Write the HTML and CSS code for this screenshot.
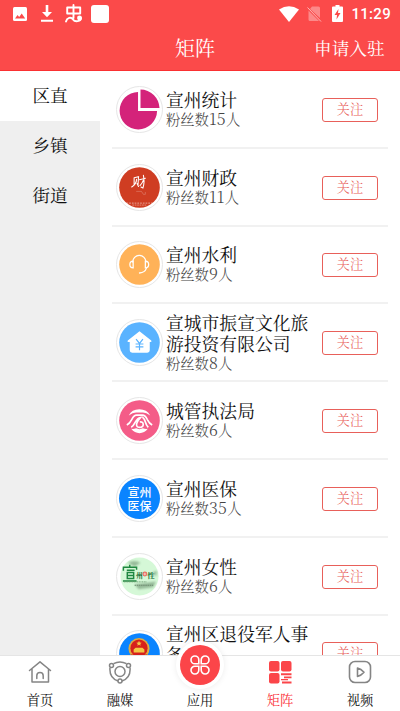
FILE: index.html
```html
<!DOCTYPE html>
<html lang="zh-CN">
<head>
  <meta charset="UTF-8">
  <meta name="viewport" content="width=device-width, initial-scale=1">
  <title>矩阵</title>
  <link rel="stylesheet" href="styles.css">
</head>
<body>
  <div class="app">
    <header class="header">
      <div class="status-bar">
        <div class="status-left">
          <svg width="14" height="14" viewBox="0 0 14 14"><rect width="14" height="14" rx="1.5" fill="#fff"/><path d="M2 11.500 4.500 8l1.700 2 2.500-3.400 3.500 4.900z" fill="#fb4a4a"/></svg>
          <svg width="12" height="17" viewBox="0 0 12 17"><path d="M4.700 0h2.600v7H11l-5 5.200L1 7h3.700zM0 14.700h12v2H0z" fill="#fff"/></svg>
          <svg width="18" height="19" viewBox="0 0 18 19" fill="none" stroke="#fff" stroke-width="1.900" stroke-linecap="round" stroke-linejoin="round"><path d="M2.200 3.500h13v6h-13zM8.500 1v13M1 17.500c1-4 5-5 7-2 2 3 8 2 8-1.500"/><circle cx="14.500" cy="14" r="1.500" fill="#fff"/></svg>
          <span class="status-block"></span>
        </div>
        <div class="status-right">
          <svg width="20" height="16" viewBox="0 0 20 16"><path d="M0 3.500Q10-3 20 3.500L10 16z" fill="#fff"/></svg>
          <svg width="15" height="16" viewBox="0 0 15 16"><path d="M5 .5h6.500q1.500 0 1.500 1.500v10L3 3zM1.500 4.500 12 15H3q-1.500 0-1.500-1.500z" fill="#fff" opacity=".35"/><path d="M.5 1.500 14 15.500" stroke="#fff" opacity=".6"/></svg>
          <svg width="11" height="17" viewBox="0 0 11 17"><path d="M3.500 0h4v1.500H10q1 0 1 1V16q0 1-1 1H1q-1 0-1-1V2.500q0-1 1-1h2.500z" fill="#fff"/><path d="M6.500 4 2.500 10H5l-.5 4.500L8.500 8H6z" fill="#fb4a4a"/></svg>
          <span class="clock">11:29</span>
        </div>
      </div>
      <div class="title-bar">
        <h1>矩阵</h1>
        <a class="apply">申请入驻</a>
      </div>
    </header>

    <main class="content">
      <nav class="sidebar">
        <a class="side-item active">区直</a>
        <a class="side-item">乡镇</a>
        <a class="side-item">街道</a>
      </nav>

      <ul class="list">
        <li class="row">
          <div class="avatar">
            <svg viewBox="0 0 42 42"><path d="M19.500 3A19.200 19.200 0 1 0 39 22.500H19.500z" fill="#d4237a"/><path d="M22 .5A19.500 19.500 0 0 1 41.500 19.500H22z" fill="#d4237a"/></svg>
          </div>
          <div class="info"><h2>宣州统计</h2><p>粉丝数<span>15</span>人</p></div>
          <button class="follow">关注</button>
        </li>
        <li class="row">
          <div class="avatar">
            <svg viewBox="0 0 42 42"><circle cx="21" cy="21" r="20.800" fill="#cf3d22"/><g fill="none" stroke="#fff" stroke-linecap="round"><path d="M15.500 11v7.500M15.500 11l4.500-1-.5 8M18 12.500c0 4-2 6-5 8M18.500 17l1.500 3" stroke-width="1.100"/><path d="M21 13l6-1.500M25 8.500c1 5 1 9-.5 13l-2-1M25 13.500c-1 3-2 4-3.500 5.500" stroke-width="1.100"/><path d="M18 25h5l2 3h2v-2" stroke-width=".5" opacity=".45"/><path d="M8 37h26" stroke-width=".9" stroke-dasharray="1 1.800" opacity=".6"/><path d="M14 39h14" stroke-width=".7" stroke-dasharray="1 1.500" opacity=".6"/></g></svg>
          </div>
          <div class="info"><h2>宣州财政</h2><p>粉丝数<span>11</span>人</p></div>
          <button class="follow">关注</button>
        </li>
        <li class="row">
          <div class="avatar">
            <svg viewBox="0 0 42 42"><circle cx="21" cy="21" r="20.800" fill="#ffb258"/><g fill="none" stroke="#fff" stroke-width="1.300" stroke-linecap="round"><path d="M14 18.500a6.800 6.800 0 0 1 13.600 0M28 25c-1 3-3.500 4.500-7 4.700"/><path d="M14.500 17.500v7c-4.500 0-4.500-7 0-7zM27 17.500v7c4.500 0 4.500-7 0-7z"/></g></svg>
          </div>
          <div class="info"><h2>宣州水利</h2><p>粉丝数<span>9</span>人</p></div>
          <button class="follow">关注</button>
        </li>
        <li class="row">
          <div class="avatar">
            <svg viewBox="0 0 42 42"><circle cx="21" cy="21" r="20.800" fill="#5ab3ff"/><path d="M21 9.500 33 19q1 1.500-.5 1.500h-1V29q0 2.500-2.500 2.500H13.500Q11 31.500 11 29v-8.500H9.500Q8 20.500 9 19z" fill="#fff"/><path d="m17.500 17.500 3.500 4.500 3.500-4.500M21 22v7M17 22.500h8M17 25.500h8" fill="none" stroke="#5ab3ff" stroke-width="1.200"/></svg>
          </div>
          <div class="info"><h2>宣城市振宣文化旅游投资有限公司</h2><p>粉丝数<span>8</span>人</p></div>
          <button class="follow">关注</button>
        </li>
        <li class="row">
          <div class="avatar">
            <svg viewBox="0 0 42 42">
              <circle cx="21" cy="21" r="20.800" fill="#f45c88"/>
              <path d="M10 16Q13 9.500 20.800 9.500T32 16Q28 12.800 24.500 12.800H17.500Q14 12.800 10 16zM12.500 29.500Q15 30 17.500 29q3.500 1.700 7 0 2.500 1 5 .5Q26 34 21 34T12.500 29.500z" fill="#fff"/>
              <path d="M8 25.500q3-1.500 5-5.500 2.200-4.500 5-4.500h6q3 0 5 4.500 2 4 5 5.500M12.500 28q2-1 4-5 2.500-4.500 5.500-5-3.500 3.500-4 6.500-.4 3.500 3 3.500 3.800 0 3.800-3t-3.500-2.500M24 17.500q2 1.500 3 5t3 5.500" fill="none" stroke="#fff" stroke-width="1.700"/>
            </svg>
          </div>
          <div class="info"><h2>城管执法局</h2><p>粉丝数<span>6</span>人</p></div>
          <button class="follow">关注</button>
        </li>
        <li class="row">
          <div class="avatar">
            <div class="avatar-text">宣州<br>医保</div>
          </div>
          <div class="info"><h2>宣州医保</h2><p>粉丝数<span>35</span>人</p></div>
          <button class="follow">关注</button>
        </li>
        <li class="row">
          <div class="avatar">
            <svg viewBox="0 0 42 42">
              <defs><filter id="ink"><feGaussianBlur stdDeviation="1.300"/></filter></defs>
              <circle cx="21" cy="21" r="19.500" fill="#d5f8d7"/>
              <path d="M9 7q7-4 13 0l-6 4zM16 29l22-3-3 6-15 2zM34 17l5-2-1 6z" fill="#6c9270" opacity=".6" filter="url(#ink)"/>
              <g fill="none" stroke="#1f8740" stroke-width="1.500"><path d="M4.500 15v-3.500H18V14M11 9v2.500M8 14.500h8M8.500 17h6.500v6H8.500zM8.500 20H15M4 25.500h14"/></g>
              <text x="17.500" y="22.500" font-size="7" fill="#176b34" font-weight="700">州</text>
              <text x="29" y="22.500" font-size="7.500" fill="#176b34" font-weight="700">性</text>
              <circle cx="26.500" cy="18.500" r="2.500" fill="#e8695c"/><path d="M25 18.500h3M26.500 17v3" stroke="#fff" stroke-width=".6"/>
              <path d="M5 26.500h23" stroke="#6c9a70" stroke-width="1" stroke-dasharray="1 .7"/>
              <path d="M16 30h19" stroke="#6e8a70" stroke-width="1.200" stroke-dasharray="1.500 .7"/>
            </svg>
          </div>
          <div class="info"><h2>宣州女性</h2><p>粉丝数<span>6</span>人</p></div>
          <button class="follow">关注</button>
        </li>
        <li class="row">
          <div class="avatar">
            <svg viewBox="0 0 42 42"><circle cx="21" cy="21" r="20.800" fill="#0a84ff"/><circle cx="20.500" cy="16" r="10.800" fill="#dfaa3e"/><circle cx="20.500" cy="15.500" r="8.800" fill="#d6201c"/><path d="m20.500 8 .8 1.700 1.900.2-1.400 1.300.4 1.900-1.700-1-1.700 1 .4-1.900-1.400-1.300 1.900-.2zM15 17l2-2h7l2 2v3H15z" fill="#f2c744"/><path d="M12 22h17l-2 7H14z" fill="#d6201c"/><path d="M13 23q7.500 4 15 0M17 28q3.500-4 7 0" fill="none" stroke="#efbd43" stroke-width="1.500"/></svg>
          </div>
          <div class="info"><h2>宣州区退役军人事务局</h2><p>粉丝数<span>8</span>人</p></div>
          <button class="follow">关注</button>
        </li>
      </ul>
    </main>

    <nav class="tab-bar">
      <a class="tab">
        <svg width="24" height="24" viewBox="0 0 24 24" fill="none" stroke="#858585" stroke-width="1.500" stroke-linejoin="round" stroke-linecap="round"><path d="M4 9v13h16.500V9M1.500 10.500 12 1.800l10.500 8.700M8.800 18.500v-2.700a3.200 3.200 0 0 1 6.400 0v2.700"/></svg>
        <span>首页</span>
      </a>
      <a class="tab">
        <svg width="24" height="24" viewBox="0 0 24 24" fill="none" stroke="#858585" stroke-width="1.500"><path d="M5.500 3.700Q12 .2 18.500 3.700M2 7.500q-1 10.500 8 13.500M22 7.500q1 10.500-8 13.500"/><circle cx="12" cy="11.500" r="5"/><circle cx="3.500" cy="5.500" r="2"/><circle cx="20.500" cy="5.500" r="2"/><circle cx="12" cy="21" r="2"/></svg>
        <span>融媒</span>
      </a>
      <a class="tab tab-center">
        <i class="bubble">
          <svg width="22" height="22" viewBox="0 0 22 22" fill="none" stroke="#fff" stroke-width="1.600"><path d="M9.800 9.800H5.900a3.900 3.900 0 1 1 3.900-3.900zM12.200 9.800V5.900a3.900 3.900 0 1 1 3.900 3.900zM9.800 12.200v3.900a3.900 3.900 0 1 1-3.900-3.900zM12.200 12.200h3.900a3.900 3.900 0 1 1-3.900 3.900z"/></svg>
        </i>
        <span>应用</span>
      </a>
      <a class="tab current">
        <svg width="24" height="24" viewBox="0 0 24 24" fill="#fb4549"><rect x="1" y="1" width="10.500" height="10.500" rx="2"/><rect x="13" y="1" width="10.500" height="10.500" rx="2"/><rect x="1" y="13" width="10.500" height="10.500" rx="2"/><path d="M13 13.200h10.500v2H13zM16 16.500h7.500v1.800H16zM13 19h7v1.300h-7zM14 21.500h9.500v2H14z"/></svg>
        <span>矩阵</span>
      </a>
      <a class="tab">
        <svg width="24" height="24" viewBox="0 0 24 24" fill="none" stroke="#858585" stroke-width="1.600" stroke-linejoin="round"><rect x="1.500" y="1.500" width="21" height="21" rx="5.500"/><path d="M9.500 8v8.500q3.500-.7 6.500-4.200Q13 8.800 9.500 8z"/></svg>
        <span>视频</span>
      </a>
    </nav>
  </div>
</body>
</html>
```

FILE: styles.css
```css
* {
  box-sizing: border-box;
}
body {
  margin: 0;
  font-family: "Noto Serif CJK SC", "Noto Sans CJK SC", serif;
  font-weight: 400;
  color: #111;
  background: #fff;
}
svg {
  display: block;
}
h1, h2, p, ul {
  margin: 0;
  padding: 0;
  font-weight: inherit;
}
.app {
  display: flex;
  flex-direction: column;
  height: 711px;
  overflow: hidden;
}

/* Header */
.header {
  flex: none;
  height: 71px;
  background: #fb4a4a;
  border-bottom: 1px solid #fa3032;
  color: #fff;
}
.status-bar {
  display: flex;
  justify-content: space-between;
  height: 27px;
  padding: 0 9px 0 13px;
}
.status-left, .status-right {
  display: flex;
  align-items: center;
}
.status-left {
  gap: 12px;
}
.status-left svg:nth-child(2) {
  margin-left: 2px;
}
.status-left svg:nth-child(3) {
  margin-right: -4px;
}
.status-block {
  width: 18px;
  height: 18px;
  border-radius: 3px;
  background: #fff;
}
.status-right {
  gap: 8px;
}
.status-right svg:nth-child(2) {
  margin-right: 2px;
}
.clock {
  font: 500 15px/20px Roboto, sans-serif;
  letter-spacing: 0.3px;
}
.title-bar {
  display: grid;
  grid-template-columns: 1fr auto 1fr;
  align-items: center;
  height: 43px;
  padding: 0 15.500px;
}
.title-bar h1 {
  grid-column: 2;
  margin-top: -2px;
  margin-left: -10px;
  font-size: 20px;
  line-height: 38px;
}
.apply {
  justify-self: end;
  margin-top: -2px;
  font-size: 17.600px;
  line-height: 38px;
}

/* Content */
.content {
  display: flex;
  flex: 1;
  min-height: 0;
  overflow: hidden;
}
.sidebar {
  flex: none;
  width: 100px;
  background: #efefef;
}
.side-item {
  display: block;
  height: 50px;
  font-size: 17.600px;
  line-height: 47px;
  text-align: center;
}
.side-item.active {
  background: #fff;
}
.list {
  flex: 1;
  padding: 0 12px;
  list-style: none;
}
.row {
  display: flex;
  align-items: center;
  height: 77.800px;
  border-bottom: 2px solid #f1f1f1;
  padding: 1px 10px 0 4px;
}
.avatar {
  flex: none;
  width: 47px;
  height: 47px;
  padding: 2px;
  border: 1px solid #e6e6e6;
  border-radius: 50%;
}
.avatar svg {
  width: 41px;
  height: 41px;
}
.avatar-text {
  width: 41px;
  height: 41px;
  padding-top: 7px;
  border-radius: 50%;
  background: #0a84ff;
  color: #fff;
  font: 500 12px/14px "Noto Sans CJK SC", sans-serif;
  text-align: center;
}
.info {
  flex: none;
  width: 145px;
  margin-left: 3px;
  margin-top: -1px;
}
.info h2 {
  font-size: 17.800px;
  line-height: 21px;
}
.info p {
  font-size: 14.300px;
  font-weight: 300;
  line-height: 19px;
  color: #444;
}
.info p span {
  font-size: 16px;
  line-height: 1;
  letter-spacing: 0.4px;
}
.follow {
  flex: none;
  width: 56px;
  height: 24px;
  margin-left: 11px;
  margin-top: 1px;
  padding: 0 0 3px;
  border: 1px solid #e8605a;
  border-radius: 3px;
  background: #fff;
  color: #e8605a;
  font: inherit;
  font-size: 13.200px;
  font-weight: 300;
  line-height: 19px;
}

/* Bottom tabs */
.tab-bar {
  position: relative;
  display: flex;
  flex: none;
  height: 56px;
  border-top: 1px solid #e5e5e5;
  background: #fff;
}
.tab {
  position: relative;
  display: flex;
  flex: 1;
  flex-direction: column;
  align-items: center;
  padding-top: 4px;
  font-size: 13.300px;
}
.tab span {
  margin-top: 7px;
  line-height: 18px;
}
.tab-center {
  justify-content: flex-end;
  padding-bottom: 2px;
}
.bubble {
  position: absolute;
  top: -11px;
  left: 20px;
  display: flex;
  align-items: center;
  justify-content: center;
  width: 40px;
  height: 40px;
  border-radius: 50%;
  background: #fb4549;
  box-shadow: 0 0 0 4px #fff, 0 0 6px 4px rgba(0, 0, 0, 0.08);
}
.current {
  color: #fb3038;
}
```
